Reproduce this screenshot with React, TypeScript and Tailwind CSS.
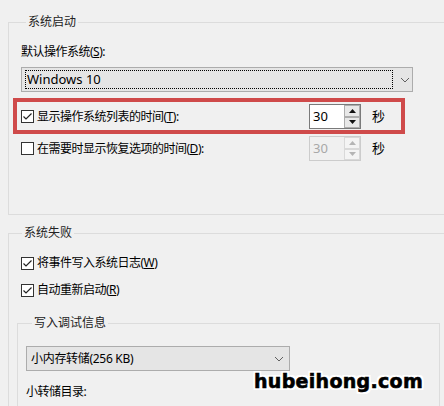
import React from "react"

const font = "font-['Noto_Sans','Noto_Sans_CJK_SC',sans-serif]"

// small win10 style checkbox
function CheckBox({ checked }: { checked: boolean }) {
  return (
    <span className="w-[13px] h-[13px] border border-[#333] bg-white flex items-center justify-center shrink-0">
      {checked && (
        <svg width="11" height="11" viewBox="0 0 11 11">
          <polyline points="1.5,5.5 4,8 9.5,2.5" fill="none" stroke="#222" strokeWidth="1.2" />
        </svg>
      )}
    </span>
  )
}

function Chevron({ x = 0 }: { x?: number }) {
  return (
    <svg width="10" height="6" viewBox="0 0 10 6" style={{ marginLeft: x }}>
      <polyline points="1,1 5,5 9,1" fill="none" stroke="#606060" strokeWidth="1" />
    </svg>
  )
}

function Spin({ value, disabled }: { value: string; disabled?: boolean }) {
  const tri = disabled ? "#b5b5b5" : "#111"
  return (
    <div
      className={`w-[52px] h-[25px] flex border ${
        disabled ? "border-[#cccccc] bg-[#f0f0f0]" : "border-[#7a7a7a] bg-white"
      }`}
    >
      <span
        className={`flex-1 pl-[3px] text-[13px] leading-[23px] ${disabled ? "text-[#a8a8a8]" : "text-black"}`}
      >
        {value}
      </span>
      <div className="w-[16px] flex flex-col">
        {[0, 1].map((i) => (
          <div
            key={i}
            className={`flex-1 flex items-center justify-center border ${
              disabled ? "border-[#d9d9d9] bg-[#f4f4f4]" : "border-[#adadad] bg-[#e8e8e8]"
            }`}
          >
            <svg width="7" height="4" viewBox="0 0 7 4">
              <polygon points={i === 0 ? "0,4 3.5,0 7,4" : "0,0 3.5,4 7,0"} fill={tri} />
            </svg>
          </div>
        ))}
      </div>
    </div>
  )
}

function Legend({ children, ml }: { children: React.ReactNode; ml: string }) {
  return <legend className={`${ml} px-[2px] leading-[14px] text-[12px] text-[#222]`}>{children}</legend>
}

export default function App() {
  return (
    <div className={`relative w-[444px] h-[406px] overflow-hidden bg-[#f0f0f0] pt-[15px] pl-[8px] ${font} text-black`}>
      {/* 系统启动 */}
      <fieldset className="w-[470px] border border-[#dcdcdc] pl-[12px] pb-[53px]">
        <Legend ml="ml-[5px]">系统启动</Legend>
        <div className="mt-[16px] text-[12px] leading-[14px] tracking-[-0.5px]">
          默认操作系统(<span className="underline">S</span>):
        </div>
        <div className="mt-[8px] w-[392px] h-[25px] border border-[#acacac] bg-[#e5e5e5] flex items-center pl-[3px]">
          <div className="w-[368px] h-[19px] border border-dotted border-black flex items-center pl-[1px] text-[13px]">
            Windows 10
          </div>
          <Chevron x={7} />
        </div>

        <div className="mt-[12px] flex items-center">
          <div className="w-[288px] flex items-center gap-[3px] text-[12px] leading-[14px] tracking-[-0.5px]">
            <CheckBox checked />
            <span>
              显示操作系统列表的时间(<span className="underline">T</span>):
            </span>
          </div>
          <Spin value="30" />
          <span className="ml-[11px] text-[13px]">秒</span>
        </div>

        <div className="mt-[7px] flex items-center">
          <div className="w-[288px] flex items-center gap-[3px] text-[12px] leading-[14px] tracking-[-0.5px]">
            <CheckBox checked={false} />
            <span>
              在需要时显示恢复选项的时间(<span className="underline">D</span>):
            </span>
          </div>
          <Spin value="30" disabled />
          <span className="ml-[11px] text-[13px]">秒</span>
        </div>
      </fieldset>

      {/* 系统失败 */}
      <fieldset className="mt-[11px] w-[470px] border border-[#dcdcdc] pl-[8px] pb-[20px]">
        <Legend ml="ml-[5px]">系统失败</Legend>
        <div className="mt-[16px] pl-[4px] flex items-center gap-[3px] text-[12px] leading-[14px] tracking-[-0.5px]">
          <CheckBox checked />
          <span>
            将事件写入系统日志(<span className="underline">W</span>)
          </span>
        </div>
        <div className="mt-[13px] pl-[4px] flex items-center gap-[3px] text-[12px] leading-[14px] tracking-[-0.5px]">
          <CheckBox checked />
          <span>
            自动重新启动(<span className="underline">R</span>)
          </span>
        </div>

        <fieldset className="mt-[19px] w-[423px] border border-[#dcdcdc] pl-[8px] pb-[20px]">
          <Legend ml="ml-[6px]">写入调试信息</Legend>
          <div className="mt-[16px] w-[264px] h-[25px] border border-[#acacac] bg-[#e5e5e5] flex items-center pl-[4px] text-[12px] tracking-[-0.3px]">
            <span className="flex-1">小内存转储(256 KB)</span>
            <span className="pr-[5px]">
              <Chevron />
            </span>
          </div>
          <div className="mt-[14px] text-[12px] leading-[14px] tracking-[-0.5px]">小转储目录:</div>
          <div className="mt-[7px] w-[267px] h-[23px] border border-[#7a7a7a] bg-white" />
        </fieldset>
      </fieldset>

      {/* annotation */}
      <div className="absolute left-[13px] top-[98px] w-[392px] h-[36px] border-[4px] border-[#cf4a4a]" />

      {/* watermark */}
      <div className="absolute left-[254px] top-[369px] font-['DejaVu_Sans',sans-serif] font-bold text-[19px] leading-[24px] tracking-[0.3px] text-black [-webkit-text-stroke:0.6px_black] [text-shadow:2px_2px_0_#fff,-2px_-2px_0_#fff,2px_-2px_0_#fff,-2px_2px_0_#fff,0_2px_0_#fff,2px_0_0_#fff,-2px_0_0_#fff,0_-2px_0_#fff]">
        hubeihong.com
      </div>
    </div>
  )
}
